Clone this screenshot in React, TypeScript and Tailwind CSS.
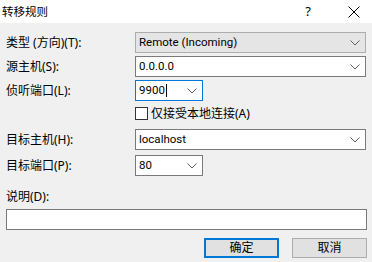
import React from "react";

const font = { fontFamily: '"Segoe UI", "Noto Sans", "Noto Sans CJK SC", sans-serif' };
const valueFont = { fontFamily: 'Roboto, "Noto Sans", sans-serif' };

function Chevron() {
    return (
        <svg width="10" height="6" viewBox="0 0 10 6" className="shrink-0">
            <path d="M0.5 0.5 L5 5 L9.5 0.5" fill="none" stroke="#606060" strokeWidth="1" />
        </svg>
    );
}

interface ComboProps {
    value: string;
    width: string;
    variant?: "list" | "edit" | "focus";
    caret?: boolean;
}

function Combo({ value, width, variant = "edit", caret }: ComboProps) {
    const box =
        variant === "list"
            ? "bg-[#e5e5e5] border-[#adadad]"
            : variant === "focus"
              ? "bg-white border-[#0078d7]"
              : "bg-white border-[#7a7a7a]";
    return (
        <div className={`${width} h-[21px] border ${box} flex items-center pl-[3px] pr-[5px]`}>
            <span className="flex-1 text-[11.5px] leading-none text-black flex items-center" style={valueFont}>
                {value}
                {caret && <span className="inline-block w-px h-[13px] bg-black ml-px" />}
            </span>
            <Chevron />
        </div>
    );
}

function Row({ label, children, className = "" }: { label: string; children: React.ReactNode; className?: string }) {
    return (
        <div className={`flex items-center ${className}`}>
            <div className="w-[129px] text-[12px] leading-none text-black">{label}</div>
            {children}
        </div>
    );
}

export default function App() {
    return (
        <div className="w-[372px] h-[262px] bg-[#f0f0f0] flex flex-col overflow-hidden" style={font}>
            {/* Title bar */}
            <div className="h-[23px] bg-white flex items-center shrink-0">
                <span className="pl-[2px] text-[11.5px] text-black leading-none">转移规则</span>
                <span className="ml-auto text-[13px] text-black leading-none mr-[37px]">?</span>
                <svg width="12" height="12" viewBox="0 0 12 12" className="mr-[12px]">
                    <path d="M0.5 0.5 L11.5 11.5 M11.5 0.5 L0.5 11.5" stroke="#000" strokeWidth="1" />
                </svg>
            </div>

            <div className="flex flex-col px-[6px] pt-[9px]">
                <Row label="类型 (方向)(T):">
                    <Combo value="Remote (Incoming)" width="w-[231px]" variant="list" />
                </Row>
                <Row label="源主机(S):" className="mt-[3px]">
                    <Combo value="0.0.0.0" width="w-[231px]" />
                </Row>
                <Row label="侦听端口(L):" className="mt-[3px]">
                    <Combo value="9900" width="w-[68px]" variant="focus" caret />
                </Row>
                <div className="flex items-center mt-[6px] pl-[129px]">
                    <div className="w-[13px] h-[13px] border border-[#333] bg-white" />
                    <span className="ml-[3px] text-[12px] leading-none text-black">仅接受本地连接(A)</span>
                </div>
                <Row label="目标主机(H):" className="mt-[9px]">
                    <Combo value="localhost" width="w-[231px]" />
                </Row>
                <Row label="目标端口(P):" className="mt-[5px]">
                    <Combo value="80" width="w-[68px]" />
                </Row>

                <div className="mt-[14px] text-[12px] leading-[14px] text-black">说明(D):</div>
                <div className="mt-[5px] h-[21px] w-[361px] bg-white border border-[#7a7a7a]" />

                <div className="mt-[8px] flex justify-end gap-[13px] mr-[-1px]">
                    <button className="w-[75px] h-[20px] bg-[#e1e1e1] border-2 border-[#0078d7] text-[12px] leading-none text-black flex items-center justify-center">
                        确定
                    </button>
                    <button className="w-[75px] h-[20px] bg-[#e1e1e1] border border-[#adadad] text-[12px] leading-none text-black flex items-center justify-center">
                        取消
                    </button>
                </div>
            </div>
        </div>
    );
}
